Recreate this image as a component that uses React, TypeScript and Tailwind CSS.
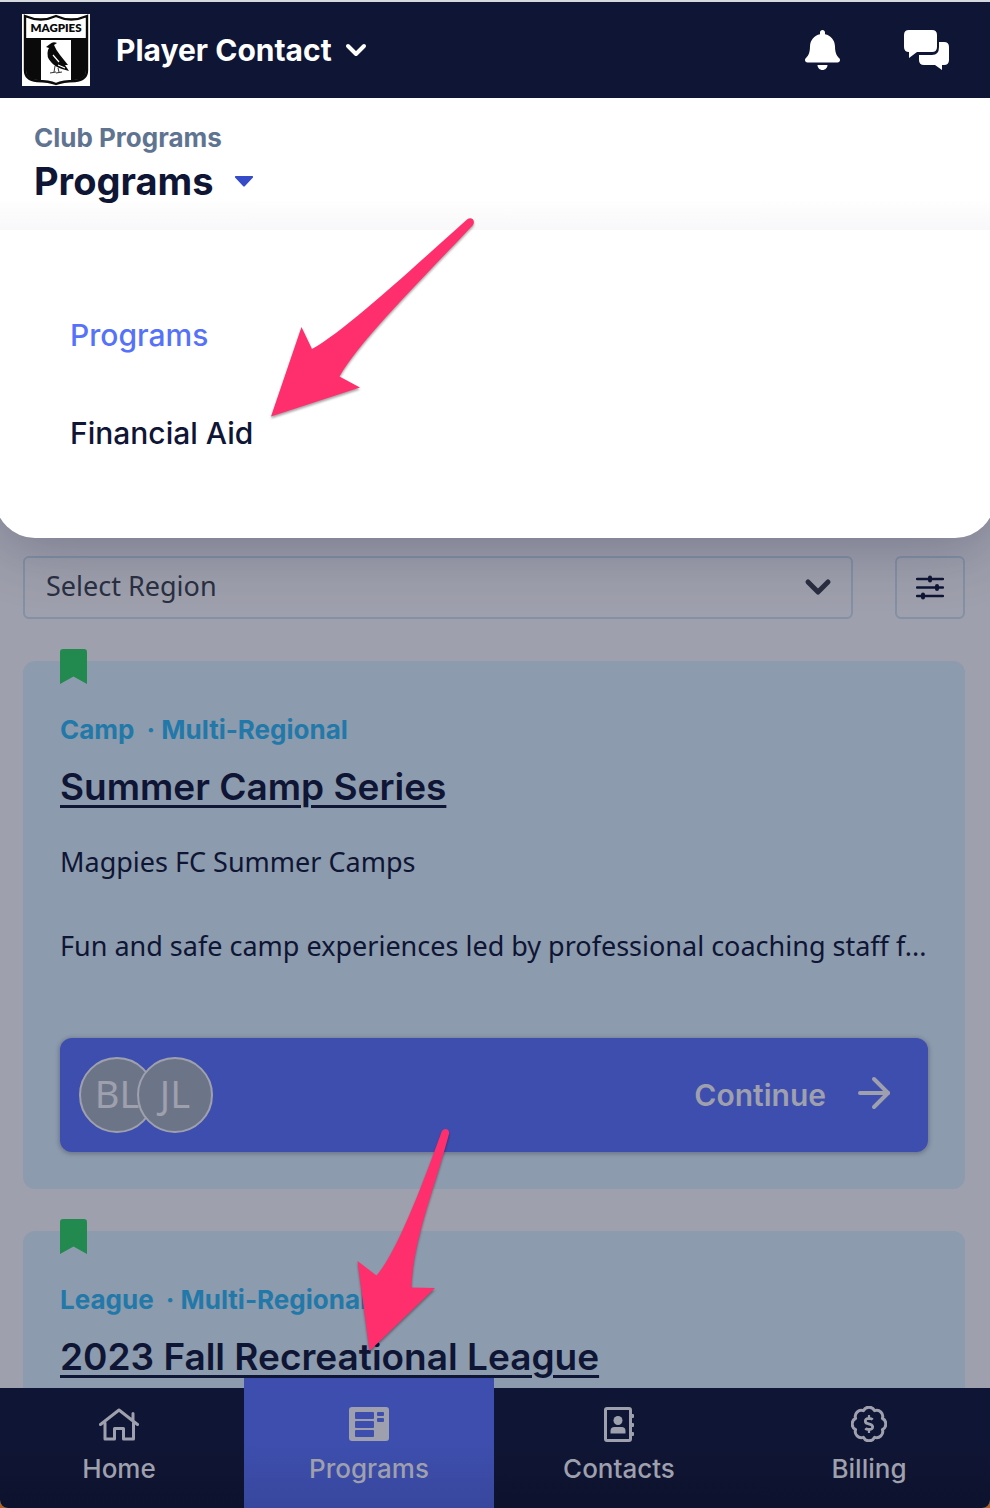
import React, { useState } from "react"
import { FaBell, FaDollarSign } from "react-icons/fa"
import { ChevronDown, ArrowRight } from "lucide-react"

const programs = [
  {
    id: "summer-camp",
    type: "Camp",
    region: "Multi-Regional",
    title: "Summer Camp Series",
    subtitle: "Magpies FC Summer Camps",
    description: "Fun and safe camp experiences led by professional coaching staff f...",
    members: ["BL", "JL"],
  },
  {
    id: "fall-league",
    type: "League",
    region: "Multi-Regional",
    title: "2023 Fall Recreational League",
    subtitle: "",
    description: "",
    members: [],
  },
]

function ClubLogo() {
  return (
    <svg viewBox="0 0 68 72" className="w-[68px] h-[72px] shrink-0" role="img" aria-label="Magpies">
      <rect width="68" height="72" fill="#fff" />
      <path d="M3 2Q19 9 34 2Q49 9 65 2V56Q65 66 53 67Q41 67 34 70Q27 67 15 67Q3 66 3 56Z" fill="#fff" stroke="#0a0a0a" strokeWidth="2.4" />
      <path d="M4 24H64V56Q64 66 52 66H49V26H19V66H16Q4 66 4 56Z" fill="#0a0a0a" />
      <text x="34" y="18" textAnchor="middle" fontSize="11.5" fontWeight="800" fill="#0a0a0a" fontFamily="Lato, sans-serif">MAGPIES</text>
      <path d="M24 33L28 30Q31 27 35 29L32 31Q34 36 38 41L46 51L43 51L47 57L40 55Q33 53 29 48Q24 43 26 36L27 34Z" fill="#0a0a0a" />
      <path d="M31 41L37 48M36 51L43 54" stroke="#fff" strokeWidth="1.2" />
      <path d="M33 52L32 58M36 54L37 58M28 59L34 58M34 59L40 58" stroke="#333" strokeWidth="1" />
    </svg>
  )
}

function ChatIcon() {
  return (
    <svg viewBox="0 0 46 40" className="w-[46px] h-10" fill="currentColor">
      <path d="M5 0H28Q33 0 33 5V17Q33 22 28 22H13L5 28V22Q0 22 0 17V5Q0 0 5 0Z" />
      <path d="M35 12H40Q45 12 45 17V30Q45 35 40 35H38V40L31 35H20Q15 35 15 30V25H28Q35 25 35 17Z" />
    </svg>
  )
}

function FilterIcon() {
  return (
    <svg viewBox="0 0 28 26" className="w-7 h-[26px]" stroke="currentColor" strokeLinecap="round" fill="none">
      <path d="M1 4H27M1 12.500H27M1 21H27" strokeWidth="2.4" />
      <path d="M14 2.500V5.500M21 11V14M7 19.500V22.500" strokeWidth="4" />
    </svg>
  )
}

function HomeIcon() {
  return (
    <svg viewBox="0 0 40 36" className="w-10 h-9" fill="none" stroke="currentColor" strokeWidth="3" strokeLinecap="round" strokeLinejoin="round">
      <path d="M1.500 18.500L20 4L38.500 18.500M34 14V7.500" />
      <path d="M6 17V33H15.500V22.500H24.500V33H34.500V17" />
    </svg>
  )
}

function ProgramsIcon() {
  return (
    <svg viewBox="0 0 40 36" className="w-10 h-9">
      <rect y="1" width="40" height="34" rx="3" fill="currentColor" />
      <g fill="#3d4eae">
        <rect x="6" y="6" width="19" height="7" rx="1" />
        <rect x="6" y="15" width="19" height="7" rx="1" />
        <rect x="6" y="24" width="19" height="7" rx="1" />
        <rect x="28" y="6" width="7" height="4" rx="1" />
        <rect x="28" y="12" width="7" height="4" rx="1" />
      </g>
    </svg>
  )
}

function ContactsIcon() {
  return (
    <svg viewBox="0 0 30 36" className="w-[30px] h-9" fill="currentColor">
      <rect x="1.500" y="2.500" width="25" height="32" rx="1.500" fill="none" stroke="currentColor" strokeWidth="3" />
      <path d="M26 8H29Q30 8 30 9V11Q30 12 29 12H26ZM26 17H29Q30 17 30 18V20Q30 21 29 21H26ZM26 26H29Q30 26 30 27V29Q30 30 29 30H26Z" />
      <circle cx="14" cy="14.500" r="4.500" />
      <path d="M6.500 27.500V25Q6.500 21 10.500 21H17.500Q21.500 21 21.500 25V27.500Z" />
    </svg>
  )
}

function BillingIcon() {
  // eight lobes joined at evenly spaced notches
  const notches = Array.from({ length: 9 }, (_, i) => {
    const a = ((i * 45 + 22.5) * Math.PI) / 180
    return `${(18 + 14.5 * Math.cos(a)).toFixed(2)} ${(18 + 14.5 * Math.sin(a)).toFixed(2)}`
  })
  return (
    <span className="relative flex h-9 w-9 items-center justify-center">
      <svg viewBox="0 0 36 36" className="absolute inset-0 h-9 w-9" fill="none" stroke="currentColor" strokeWidth="3" strokeLinejoin="round">
        <path d={`M${notches[0]}` + notches.slice(1).map((p) => `A6.2 6.2 0 0 1 ${p}`).join("") + "Z"} />
      </svg>
      <FaDollarSign className="h-[18px] w-[18px]" />
    </span>
  )
}

const tabs = [
  { label: "Home", icon: <HomeIcon />, active: false },
  { label: "Programs", icon: <ProgramsIcon />, active: true },
  { label: "Contacts", icon: <ContactsIcon />, active: false },
  { label: "Billing", icon: <BillingIcon />, active: false },
]

function ProgramCard({ program }: { program: (typeof programs)[number] }) {
  return (
    <article className="relative h-[528px] shrink-0 rounded-xl bg-[#8c9bad] px-[37px] pt-[52px]">
      <svg viewBox="0 0 27 35" className="absolute left-[37px] -top-3 w-[27px] h-[35px]" fill="#22894f">
        <path d="M3 0H24Q27 0 27 3V35L13.500 27.500L0 35V3Q0 0 3 0Z" />
      </svg>
      <p className="flex gap-3 text-[26px] leading-[34px] font-bold text-[#2279a9]">
        <span>{program.type}</span>
        <span>· {program.region}</span>
      </p>
      <h2 className="mt-4 text-[37px] leading-[48px] font-semibold">
        <a href={`#${program.id}`} className="underline decoration-[3px] underline-offset-[5px]">{program.title}</a>
      </h2>
      {program.subtitle && (
        <div className="mt-[30px] font-['Noto_Sans',sans-serif] text-[27px] leading-[42px] whitespace-nowrap">
          <p>{program.subtitle}</p>
          <p className="mt-[42px]">{program.description}</p>
        </div>
      )}
      {program.members.length > 0 && (
        <button className="mt-[71px] flex h-[114px] w-full items-center rounded-xl bg-[#3d4eae] pr-[30px] pl-[19px] text-[#9fa0ad] shadow-[0_1px_4px_1px_rgba(60,60,90,0.4)]">
          <span className="flex -space-x-[18px]">
            {program.members.map((m) => (
              <span key={m} className="flex h-[76px] w-[76px] items-center justify-center rounded-full border-2 border-[#9fa0ad] bg-[#6c7588] pb-1 font-['Noto_Sans',sans-serif] text-[38px]">
                {m}
              </span>
            ))}
          </span>
          <span className="ml-auto text-[30px] font-semibold">Continue</span>
          <ArrowRight className="mb-1 ml-6 h-12 w-12" strokeWidth={2} />
        </button>
      )}
    </article>
  )
}

export default function App() {
  const [region, setRegion] = useState("")

  return (
    <div className="bg-[#b0601f]">
      <div className="flex h-screen flex-col overflow-hidden rounded-b-lg bg-[#9fa0ad] font-['Inter',sans-serif] text-[#0f1534]">
        <header className="flex h-[98px] shrink-0 items-center border-t-2 border-[#d5d8df] bg-[#0f1534] pr-[40px] pl-[22px] text-white">
          <ClubLogo />
          <button className="ml-[26px] flex items-center gap-2 text-[30px] font-bold">
            Player Contact
            <ChevronDown className="h-8 w-8" strokeWidth={3} />
          </button>
          <button aria-label="Notifications" className="ml-auto">
            <FaBell className="h-10 w-[35px]" />
          </button>
          <button aria-label="Messages" className="ml-16">
            <ChatIcon />
          </button>
        </header>

        <section className="h-[132px] shrink-0 bg-linear-to-b from-white from-75% to-[#f8f8fa] px-[34px] pt-6">
          <p className="text-[26px] leading-8 font-bold text-[#5f7491]">Club Programs</p>
          <h1 className="text-[38px] leading-[54px] font-bold">
            <button className="flex items-center gap-[22px]">
              Programs
              <svg viewBox="0 0 18 11" className="h-[11px] w-[18px]" fill="#364bc8">
                <path d="M1 0H17Q19 0 17.500 2L10 10Q9 11 8 10L0.500 2Q-1 0 1 0Z" />
              </svg>
            </button>
          </h1>
        </section>

        <nav className="relative z-10 -mx-[5px] flex h-[308px] shrink-0 flex-col gap-[50px] rounded-b-[40px] bg-white px-[75px] pt-[81px] text-[30px] leading-[48px] font-medium shadow-[0_10px_60px_rgba(30,35,70,0.3)] [clip-path:inset(0_0_-120px_0)]">
          <a href="#programs" className="self-start text-[#5671fa]">Programs</a>
          <a href="#financial-aid" className="self-start">Financial Aid</a>
        </nav>

        <div className="relative z-20 h-0">
          <svg viewBox="270 216 206 204" className="absolute bottom-[118px] left-[270px] h-[204px] w-[206px] drop-shadow-[0_2px_1px_rgba(0,0,0,0.35)]" fill="#ff2f6d">
            <path d="M271 416.500L301.500 327L312 349C345 331 415 266 467 219.500C471 216 476 220 473 225C430 271 360 340 339.500 376.500L360 387.500Z" />
          </svg>
        </div>

        <main className="flex min-h-0 flex-1 flex-col overflow-hidden pr-[25px] pl-[23px] pt-[18px]">
          <div className="flex shrink-0 gap-[42px]">
            <div className="relative flex-1">
              <select
                aria-label="Select Region"
                value={region}
                onChange={(e) => setRegion(e.target.value)}
                className="h-[63px] w-full appearance-none rounded-md border-2 border-[#8490a3] bg-transparent px-[21px] pb-0.5 font-['Noto_Sans',sans-serif] text-[27px] text-[#2a3042]"
              >
                <option value="">Select Region</option>
              </select>
              <ChevronDown className="pointer-events-none absolute top-[11px] right-[15px] h-10 w-10 text-[#2a2d40]" strokeWidth={3} />
            </div>
            <button aria-label="Filters" className="flex h-[63px] w-[70px] items-center justify-center rounded-md border-2 border-[#8490a3]">
              <FilterIcon />
            </button>
          </div>

          <div className="mt-[42px] flex flex-col gap-[42px]">
            {programs.map((program) => (
              <ProgramCard key={program.id} program={program} />
            ))}
          </div>
        </main>

        <nav className="-mr-1 -ml-[6px] grid h-[120px] shrink-0 grid-cols-4 bg-linear-to-b from-[#0f1534] from-50% to-[#0d122d] text-[26px] leading-8 font-medium text-[#9fa0ad]">
          {tabs.map((tab) => (
            <a
              key={tab.label}
              href={`#${tab.label.toLowerCase()}`}
              className={
                tab.active
                  ? "relative -mt-[10px] flex flex-col items-center gap-[11px] bg-linear-to-b from-[#3d4eae] from-50% to-[#38479d] pt-7"
                  : "flex flex-col items-center gap-[11px] pt-[18px]"
              }
            >
              {tab.icon}
              {tab.label}
              {tab.active && (
                <svg viewBox="354 1128 98 227" className="absolute -top-[250px] left-[110px] h-[227px] w-[98px] drop-shadow-[0_2px_1px_rgba(0,0,0,0.35)]" fill="#ff2f6d">
                  <path d="M369.500 1351L357.500 1261L376.500 1275.500C395 1255 420 1192 441.500 1132C444 1127 450 1129 449 1134C435 1187 413 1240 411.500 1287.500L435 1288Z" />
                </svg>
              )}
            </a>
          ))}
        </nav>
      </div>
    </div>
  )
}
